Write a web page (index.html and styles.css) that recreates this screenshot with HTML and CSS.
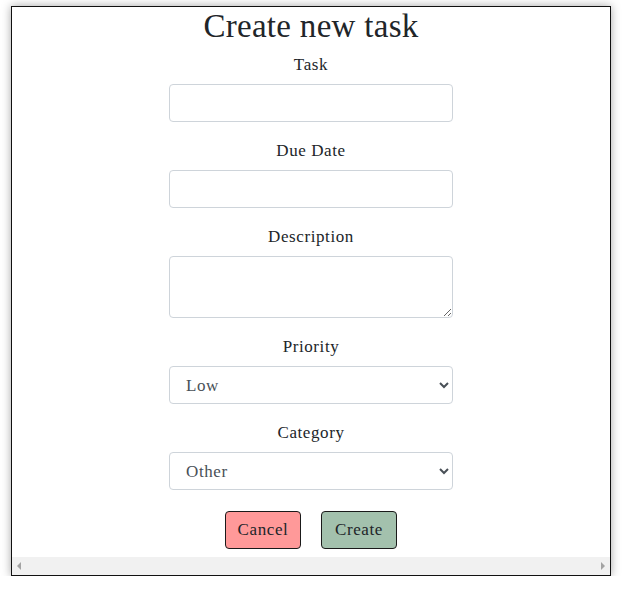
FILE: index.html
```html
<!DOCTYPE html>
<html>
<head>
<meta charset="utf-8">
<link rel="stylesheet" href="styles.css">
</head>
<body>
<div class="modal">
  <div class="content">
    <h1 class="title">Create new task</h1>
    <form class="form">
      <div class="group">
        <label class="label">Task</label>
        <input class="control" type="text">
      </div>
      <div class="group">
        <label class="label">Due Date</label>
        <input class="control" type="text">
      </div>
      <div class="group">
        <label class="label">Description</label>
        <textarea class="control area"></textarea>
      </div>
      <div class="group">
        <label class="label">Priority</label>
        <select class="control select"><option>Low</option><option>Medium</option><option>High</option></select>
      </div>
      <div class="group">
        <label class="label">Category</label>
        <select class="control select"><option>Other</option><option>Work</option><option>Home</option></select>
      </div>
      <div class="actions">
        <button type="button" class="btn cancel">Cancel</button>
        <button type="button" class="btn create">Create</button>
      </div>
    </form>
  </div>
  <div class="hscroll">
    <span class="arrow left"></span>
    <span class="arrow right"></span>
  </div>
</div>
</body>
</html>
```
FILE: styles.css
```css
html, body {
  margin: 0;
  padding: 0;
  background: #fff;
}
body {
  font-family: "Liberation Serif", "Times New Roman", serif;
  color: #212529;
}
.modal {
  margin: 6px 0 0 11px;
  width: 598px;
  height: 568px;
  border: 1px solid #111;
  box-shadow: 0 0 9px rgba(0, 0, 0, 0.35);
  display: flex;
  flex-direction: column;
  background: #fff;
}
.content {
  flex: 1;
  text-align: center;
}
.title {
  margin: 0 0 7px;
  font-size: 33px;
  line-height: 38px;
  font-weight: 400;
  letter-spacing: 0.3px;
}
.form {
  display: flex;
  flex-direction: column;
  align-items: center;
}
.group {
  display: flex;
  flex-direction: column;
  align-items: center;
  margin-bottom: 16px;
}
.label {
  display: block;
  font-size: 17px;
  letter-spacing: 0.6px;
  line-height: 23px;
  padding-top: 1px;
  margin-bottom: 8px;
}
.control {
  box-sizing: border-box;
  width: 284px;
  height: 38px;
  border: 1px solid #ced4da;
  border-radius: 4px;
  background: #fff;
  font-family: inherit;
  font-size: 17px;
  letter-spacing: 0.6px;
  color: #495057;
  padding: 6px 12px;
  margin: 0;
}
.area {
  height: 62px;
  resize: vertical;
}
.select {
  padding-left: 12px;
}
.actions {
  margin-top: 5px;
  display: flex;
  gap: 20px;
}
.btn {
  box-sizing: border-box;
  width: 76px;
  height: 38px;
  border: 1px solid #1a1a1a;
  border-radius: 4px;
  font-family: inherit;
  font-size: 17px;
  letter-spacing: 0.6px;
  color: #212529;
  padding: 0;
}
.cancel {
  background: #ff9999;
}
.create {
  background: #a3c1ad;
}
.hscroll {
  height: 18px;
  background: #f1f1f1;
  display: flex;
  justify-content: space-between;
  align-items: center;
  padding: 0 5px;
}
.arrow {
  width: 0;
  height: 0;
  border-top: 4px solid transparent;
  border-bottom: 4px solid transparent;
}
.arrow.left {
  border-right: 4px solid #a3a3a3;
}
.arrow.right {
  border-left: 4px solid #a3a3a3;
}
```
